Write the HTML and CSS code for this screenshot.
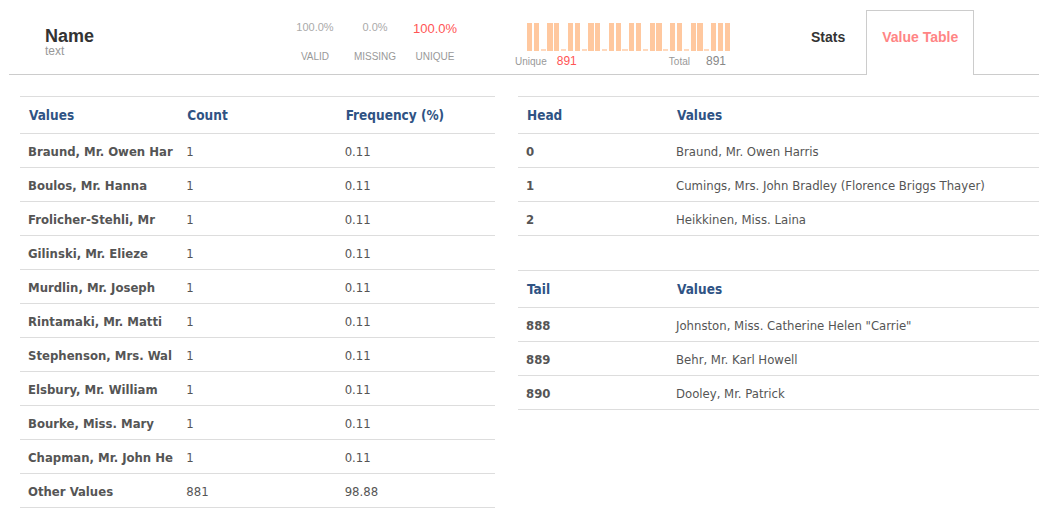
FILE: index.html
```html
<!DOCTYPE html>
<html>
<head>
<meta charset="utf-8">
<link rel="stylesheet" href="styles.css">
</head>
<body>
<header class="summary">
  <div class="title">
    <div class="name">Name</div>
    <div class="type">text</div>
  </div>
  <div class="stats">
    <div class="stat"><div class="val">100.0%</div><div class="lbl">VALID</div></div>
    <div class="stat"><div class="val">0.0%</div><div class="lbl">MISSING</div></div>
    <div class="stat"><div class="val red">100.0%</div><div class="lbl">UNIQUE</div></div>
  </div>
  <div class="hist">
    <div class="bars">
      <span class="bar"></span><span class="bar"></span><span class="bar empty"></span>
      <span class="bar"></span><span class="bar"></span><span class="bar empty"></span>
      <span class="bar"></span><span class="bar"></span><span class="bar empty"></span>
      <span class="bar"></span><span class="bar"></span><span class="bar empty"></span>
      <span class="bar"></span><span class="bar"></span><span class="bar empty"></span>
      <span class="bar"></span><span class="bar"></span><span class="bar empty"></span>
      <span class="bar"></span><span class="bar"></span><span class="bar empty"></span>
      <span class="bar"></span><span class="bar"></span><span class="bar empty"></span>
      <span class="bar"></span><span class="bar"></span><span class="bar empty"></span>
      <span class="bar"></span><span class="bar"></span><span class="bar"></span>
    </div>
    <div class="hist-labels">
      <div class="grp grp-u"><span class="hl">Unique</span><span class="hn red">891</span></div>
      <div class="grp grp-t"><span class="hl">Total</span><span class="hn">891</span></div>
    </div>
  </div>
  <nav class="tabs">
    <div class="tab">Stats</div>
    <div class="tab active">Value Table</div>
  </nav>
</header>

<main class="content">
  <table class="vt freq">
    <thead>
      <tr><th>Values</th><th>Count</th><th>Frequency (%)</th></tr>
    </thead>
    <tbody>
      <tr><td class="b">Braund, Mr. Owen Har</td><td>1</td><td>0.11</td></tr>
      <tr><td class="b">Boulos, Mr. Hanna</td><td>1</td><td>0.11</td></tr>
      <tr><td class="b">Frolicher-Stehli, Mr</td><td>1</td><td>0.11</td></tr>
      <tr><td class="b">Gilinski, Mr. Elieze</td><td>1</td><td>0.11</td></tr>
      <tr><td class="b">Murdlin, Mr. Joseph</td><td>1</td><td>0.11</td></tr>
      <tr><td class="b">Rintamaki, Mr. Matti</td><td>1</td><td>0.11</td></tr>
      <tr><td class="b">Stephenson, Mrs. Wal</td><td>1</td><td>0.11</td></tr>
      <tr><td class="b">Elsbury, Mr. William</td><td>1</td><td>0.11</td></tr>
      <tr><td class="b">Bourke, Miss. Mary</td><td>1</td><td>0.11</td></tr>
      <tr><td class="b">Chapman, Mr. John He</td><td>1</td><td>0.11</td></tr>
      <tr><td class="b">Other Values</td><td>881</td><td>98.88</td></tr>
    </tbody>
  </table>

  <div class="side">
    <table class="vt ht">
      <thead>
        <tr><th class="c1">Head</th><th>Values</th></tr>
      </thead>
      <tbody>
        <tr><td class="b">0</td><td>Braund, Mr. Owen Harris</td></tr>
        <tr><td class="b">1</td><td>Cumings, Mrs. John Bradley (Florence Briggs Thayer)</td></tr>
        <tr><td class="b">2</td><td>Heikkinen, Miss. Laina</td></tr>
      </tbody>
    </table>
    <table class="vt ht">
      <thead>
        <tr><th class="c1">Tail</th><th>Values</th></tr>
      </thead>
      <tbody>
        <tr><td class="b">888</td><td>Johnston, Miss. Catherine Helen "Carrie"</td></tr>
        <tr><td class="b">889</td><td>Behr, Mr. Karl Howell</td></tr>
        <tr><td class="b">890</td><td>Dooley, Mr. Patrick</td></tr>
      </tbody>
    </table>
  </div>
</main>
</body>
</html>
```

FILE: styles.css
```css
html, body {
  margin: 0;
  padding: 0;
  background: #fff;
}
body {
  font-family: "Liberation Sans", Arial, sans-serif;
  color: #333;
  width: 1039px;
}

/* ---------- summary header ---------- */
.summary {
  margin-left: 9px;
  height: 74px;
  border-bottom: 1px solid #ccc;
  display: flex;
  align-items: flex-start;
}
.title {
  width: 240px;
  padding-left: 36px;
  padding-top: 26px;
}
.name {
  font-size: 18px;
  font-weight: bold;
  line-height: 20px;
  color: #333;
}
.type {
  font-size: 12px;
  line-height: 14px;
  margin-top: -2px;
  color: #999;
}

.stats {
  display: flex;
  width: 180px;
}
.stat {
  width: 60px;
  text-align: center;
}
.val {
  height: 20px;
  margin-top: 17px;
  display: flex;
  align-items: center;
  justify-content: center;
  font-size: 11px;
  color: #aaa;
}
.val.red {
  font-size: 13px;
  color: #f55;
  padding-top: 2px;
  height: 18px;
}
.lbl {
  margin-top: 14px;
  font-size: 10px;
  line-height: 12px;
  color: #999;
}

.hist {
  margin-left: 50px;
  width: 215px;
  padding-top: 23px;
}
.bars {
  margin-left: 12px;
  width: 203px;
  height: 28px;
  display: flex;
  align-items: flex-end;
  gap: 1.6px;
}
.bar {
  flex: 1;
  height: 28px;
  background: #ffc89f;
}
.bar.empty {
  height: 2px;
  background: #ffd9bd;
}
.hist-labels {
  width: 211px;
  margin-top: 3px;
  display: flex;
  justify-content: space-between;
  align-items: baseline;
  line-height: 14px;
}
.grp {
  display: flex;
  align-items: baseline;
}
.grp-u { gap: 10px; }
.grp-t { gap: 16px; }
.hl {
  font-size: 10px;
  color: #999;
}
.hn {
  font-size: 12px;
  color: #888;
}
.red { color: #f55; }

.tabs {
  margin-left: 65px;
  display: flex;
  align-items: flex-start;
  margin-top: 10px;
}
.tab {
  height: 64px;
  padding: 18px 15px 0;
  box-sizing: border-box;
  border: 1px solid transparent;
  border-bottom: none;
  font-size: 14px;
  font-weight: bold;
  line-height: 16px;
  color: #333;
  margin-right: 5px;
}
.tab.active {
  height: 65px;
  padding: 18px 15px 0;
  border-color: #ccc;
  background: #fff;
  color: #ff8585;
  position: relative;
  z-index: 1;
}

/* ---------- tables ---------- */
.content {
  display: flex;
  align-items: flex-start;
  gap: 23px;
  padding: 21px 0 0 20px;
}
.side {
  flex: 1;
  display: flex;
  flex-direction: column;
  gap: 34px;
}
.vt {
  border-collapse: separate;
  border-spacing: 0;
  border-top: 1px solid #ddd;
  table-layout: fixed;
  font-family: "DejaVu Sans Condensed", "DejaVu Sans", Verdana, sans-serif;
  color: #555;
}
.freq { width: 475px; }
.ht { width: 100%; }
.ht .c1 { width: 150px; }
.vt th {
  height: 37px;
  padding: 0 9px;
  box-sizing: border-box;
  border-bottom: 1px solid #ddd;
  text-align: left;
  font-size: 13.5px;
  font-weight: bold;
  color: #2f5384;
  vertical-align: middle;
}
.vt td {
  height: 34px;
  padding: 1px 8px 0;
  box-sizing: border-box;
  border-bottom: 1px solid #ddd;
  font-size: 13px;
  color: #555;
  vertical-align: middle;
  white-space: nowrap;
  overflow: hidden;
}
.vt td.b {
  font-weight: bold;
}
```
